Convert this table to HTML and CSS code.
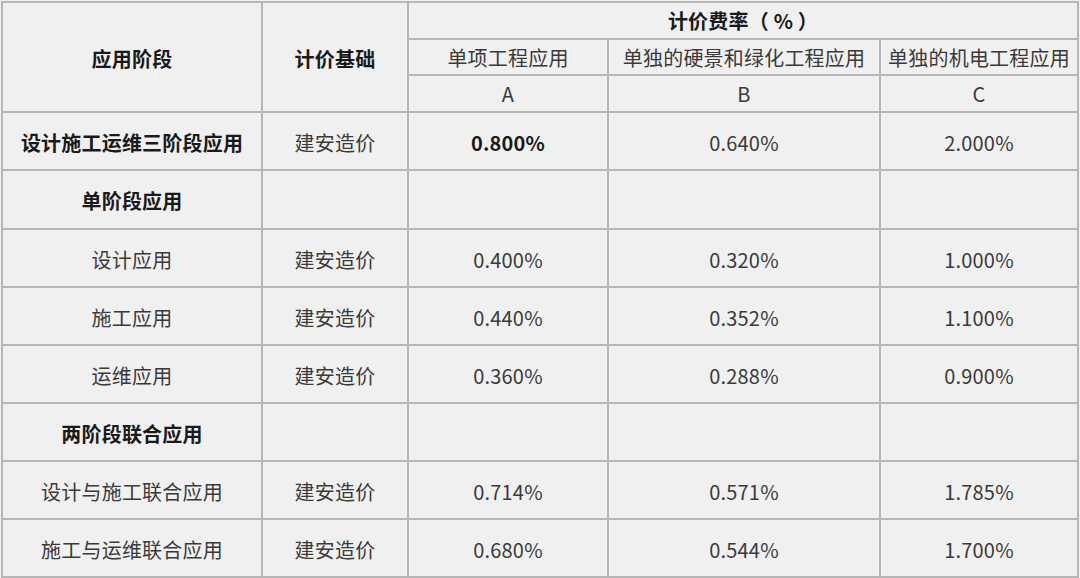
FILE: index.html
```html
<!DOCTYPE html>
<html lang="zh-CN">
<head>
<meta charset="utf-8">
<title>计价费率</title>
<link rel="stylesheet" href="styles.css">
</head>
<body>
<div class="sheet">
  <div class="cell head stage">应用阶段</div>
  <div class="cell head base">计价基础</div>
  <div class="cell head rate">计价费率（ % ）</div>
  <div class="cell sub">单项工程应用</div>
  <div class="cell sub">单独的硬景和绿化工程应用</div>
  <div class="cell sub">单独的机电工程应用</div>
  <div class="cell sub">A</div>
  <div class="cell sub">B</div>
  <div class="cell sub">C</div>

  <div class="cell b">设计施工运维三阶段应用</div>
  <div class="cell">建安造价</div>
  <div class="cell b">0.800%</div>
  <div class="cell">0.640%</div>
  <div class="cell">2.000%</div>

  <div class="cell b">单阶段应用</div>
  <div class="cell"></div>
  <div class="cell"></div>
  <div class="cell"></div>
  <div class="cell"></div>

  <div class="cell">设计应用</div>
  <div class="cell">建安造价</div>
  <div class="cell">0.400%</div>
  <div class="cell">0.320%</div>
  <div class="cell">1.000%</div>

  <div class="cell">施工应用</div>
  <div class="cell">建安造价</div>
  <div class="cell">0.440%</div>
  <div class="cell">0.352%</div>
  <div class="cell">1.100%</div>

  <div class="cell">运维应用</div>
  <div class="cell">建安造价</div>
  <div class="cell">0.360%</div>
  <div class="cell">0.288%</div>
  <div class="cell">0.900%</div>

  <div class="cell b">两阶段联合应用</div>
  <div class="cell"></div>
  <div class="cell"></div>
  <div class="cell"></div>
  <div class="cell"></div>

  <div class="cell">设计与施工联合应用</div>
  <div class="cell">建安造价</div>
  <div class="cell">0.714%</div>
  <div class="cell">0.571%</div>
  <div class="cell">1.785%</div>

  <div class="cell">施工与运维联合应用</div>
  <div class="cell">建安造价</div>
  <div class="cell">0.680%</div>
  <div class="cell">0.544%</div>
  <div class="cell">1.700%</div>
</div>
</body>
</html>
```
FILE: styles.css
```css
html, body {
  margin: 0;
  padding: 0;
  background: #f0f0f0;
}
body {
  font-family: "Noto Sans CJK SC", "Noto Sans", sans-serif;
  font-size: 20px;
  color: #3a3a3a;
}
.sheet {
  display: grid;
  grid-template-columns: 258px 144px 198px 270px 196px;
  grid-template-rows: 35px 34px 35px 56px 57px 56px 56px 56px 56px 56px 56px;
  gap: 2px;
  padding: 2px;
  margin: 1px 0 0 1px;
  width: max-content;
  background: #b6b6b6;
}
.cell {
  background: #f0f0f0;
  display: flex;
  align-items: center;
  justify-content: center;
  white-space: nowrap;
  line-height: 1;
  padding-top: 3px;
  letter-spacing: 0.2px;
}
.head, .sub {
  padding-top: 1px;
}
.head, .b {
  font-weight: 700;
  color: #1a1a1a;
}
.stage {
  grid-row: 1 / span 3;
  padding-top: 3px;
}
.base {
  grid-row: 1 / span 3;
  padding-top: 3px;
}
.rate {
  grid-column: 3 / span 3;
}
```
